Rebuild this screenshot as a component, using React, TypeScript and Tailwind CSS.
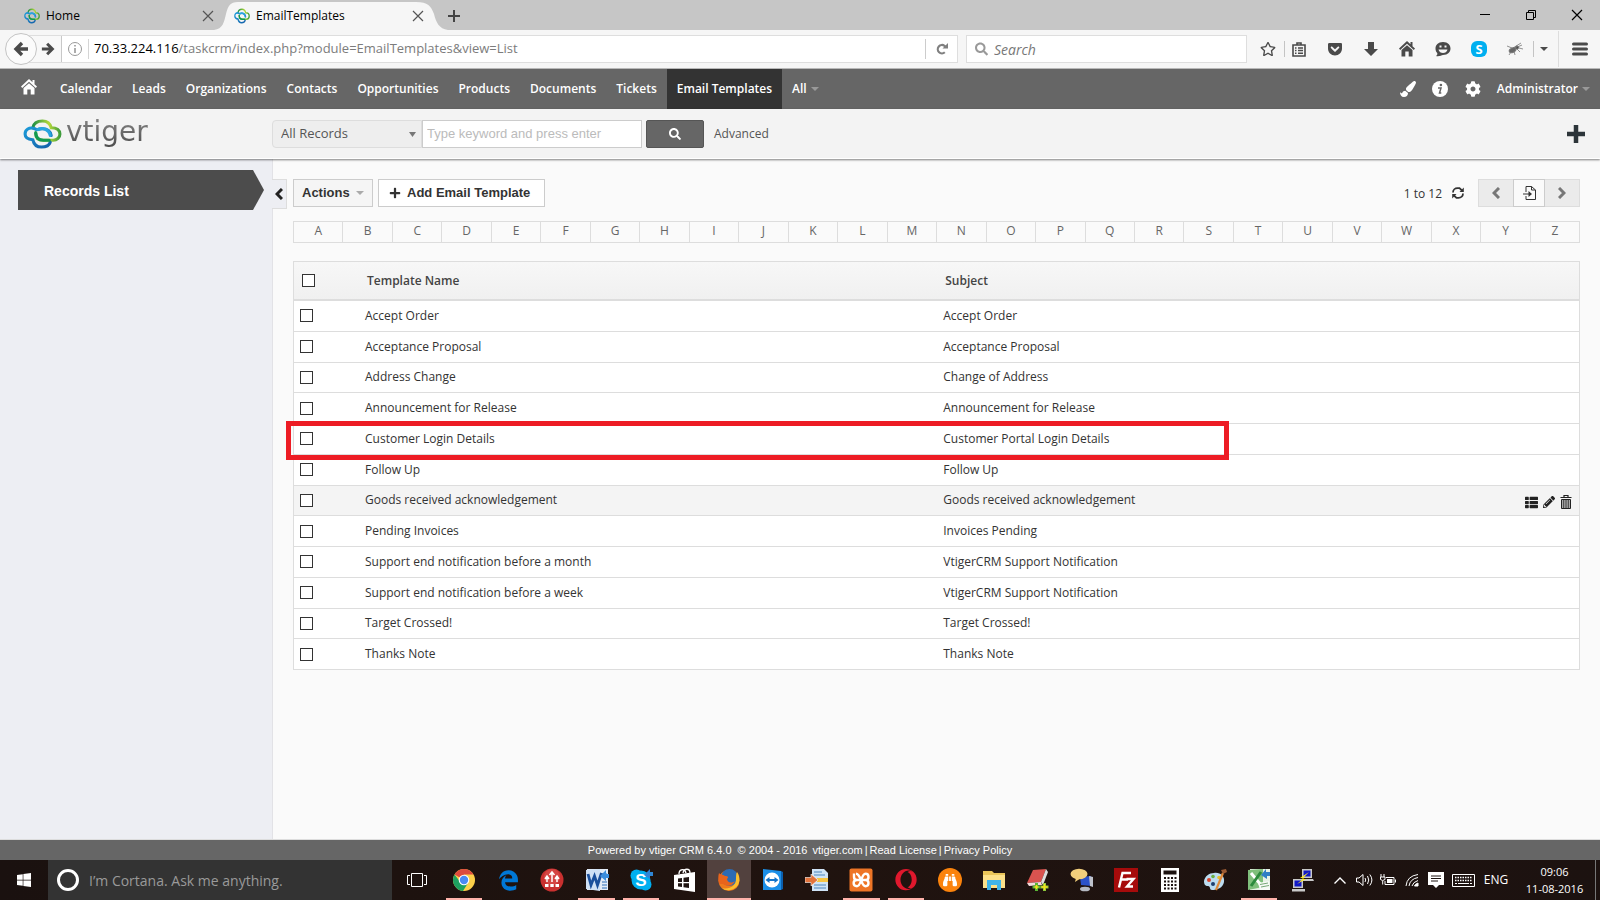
import type { ReactNode } from 'react';
import {
  FaRegStar, FaGetPocket, FaEdgeLegacy, FaOpera, FaBinoculars, FaPaintBrush,
  FaCog, FaSearch, FaPlus, FaWindows, FaThList, FaPencilAlt,
} from 'react-icons/fa';

const templates: [string, string][] = [
  ['Accept Order', 'Accept Order'],
  ['Acceptance Proposal', 'Acceptance Proposal'],
  ['Address Change', 'Change of Address'],
  ['Announcement for Release', 'Announcement for Release'],
  ['Customer Login Details', 'Customer Portal Login Details'],
  ['Follow Up', 'Follow Up'],
  ['Goods received acknowledgement', 'Goods received acknowledgement'],
  ['Pending Invoices', 'Invoices Pending'],
  ['Support end notification before a month', 'VtigerCRM Support Notification'],
  ['Support end notification before a week', 'VtigerCRM Support Notification'],
  ['Target Crossed!', 'Target Crossed!'],
  ['Thanks Note', 'Thanks Note'],
];
const HOVERED = 6;

const modules = [
  'Calendar', 'Leads', 'Organizations', 'Contacts', 'Opportunities', 'Products',
  'Documents', 'Tickets', 'Email Templates',
];

function CloudMark({ className }: { className: string }) {
  return (
    <svg viewBox="0 0 40 31" className={className} fill="none" strokeWidth="3.2" strokeLinecap="round" aria-hidden="true">
      <defs>
        <linearGradient id="markGreen" x1="0" y1="0" x2="1" y2="0">
          <stop offset="0" stopColor="#1d8f45" />
          <stop offset="0.6" stopColor="#b5d838" />
          <stop offset="1" stopColor="#3f9c3c" />
        </linearGradient>
        <linearGradient id="markBlue" x1="0" y1="0" x2="1" y2="1">
          <stop offset="0" stopColor="#1c9ad8" />
          <stop offset="1" stopColor="#1460a8" />
        </linearGradient>
      </defs>
      <path d="M10 9C11 4 15 2 20 2C25 2 28 5 29 9C35 9 38 12 38 15.500C38 19 35 22 31 22H21C15 22 13 19 13 15" stroke="url(#markGreen)" />
      <path d="M29 17C28 12 25 10 20 10C16 10 14 12 12 10C6 8 2 11 2 15.500C2 19 5 21 10 21.500C11 26 14 29 19 29C24 29 27 27 28 24" stroke="url(#markBlue)" />
      <path d="M13 14C13 19 16 22 21 22H27" stroke="#129a50" />
      <path d="M15 11C20 8 27 11 28 17" stroke="#28a4df" />
    </svg>
  );
}

function Cross({ className }: { className: string }) {
  return (
    <svg viewBox="0 0 12 12" className={className} fill="none" stroke="currentColor" strokeWidth="1.2" aria-hidden="true">
      <path d="M1 1L11 11M11 1L1 11" />
    </svg>
  );
}

function Caret({ className }: { className: string }) {
  return (
    <svg viewBox="0 0 8 4" preserveAspectRatio="none" className={className} fill="currentColor" aria-hidden="true">
      <path d="M0 0H8L4 4Z" />
    </svg>
  );
}

function Chevron({ className }: { className: string }) {
  return (
    <svg viewBox="0 0 8 12" className={className} fill="none" stroke="currentColor" strokeWidth="3" aria-hidden="true">
      <path d="M7 1L2 6L7 11" />
    </svg>
  );
}

function Arrow({ className }: { className: string }) {
  return (
    <svg viewBox="0 0 16 16" className={className} fill="none" stroke="currentColor" strokeWidth="3.400" aria-hidden="true">
      <path d="M15 8H4M9 2L3 8L9 14" />
    </svg>
  );
}

function HomeIcon({ className }: { className: string }) {
  return (
    <svg viewBox="0 0 16 16" className={className} fill="currentColor" aria-hidden="true">
      <path d="M8 0L0 7.500L1.200 8.900L8 2.800L14.800 8.900L16 7.500L13.500 5.200V1H11.500V3.300Z" />
      <path d="M8 4.200L2.500 9V15.500H6.300V10.500H9.700V15.500H13.500V9Z" />
    </svg>
  );
}

function TabStrip() {
  return (
    <div className="flex h-[30px] items-center bg-[#c6c6c6] text-black">
      <div className="flex h-full w-[214px] shrink-0 items-center pl-6 pt-0.5">
        <CloudMark className="h-4 w-4 scale-y-125" />
        <span className="ml-1.5 flex-1 text-[12px]">Home</span>
        <button aria-label="Close Home" className="flex w-3 text-[#555]"><Cross className="size-3" /></button>
      </div>
      <div className="relative flex h-full w-[234px] shrink-0 items-center pl-5 pr-6 pt-0.5">
        <svg viewBox="0 0 234 30" className="absolute inset-0 h-full w-full" aria-hidden="true">
          <path d="M0 30C9 29 10 22 12 14C14 6 16 2 24 2H202C214 2 217 6 220 14C222 22 225 29 234 30Z" fill="#f6f6f6" />
        </svg>
        <CloudMark className="relative h-4 w-4 scale-y-125" />
        <span className="relative ml-1.5 flex-1 text-[12px]">EmailTemplates</span>
        <button aria-label="Close EmailTemplates" className="relative flex text-[#555]"><Cross className="size-3" /></button>
      </div>
      <button aria-label="New tab" className="pt-0.5 text-[#444]">
        <svg viewBox="0 0 12 12" className="size-3" stroke="currentColor" strokeWidth="2" aria-hidden="true"><path d="M6 0V12M0 6H12" /></svg>
      </button>
      <div className="ml-auto flex">
        <button aria-label="Minimize" className="flex h-7 w-[46px] items-center justify-center">
          <svg viewBox="0 0 10 10" className="size-2.5" stroke="currentColor" aria-hidden="true"><path d="M0 4.500H10" /></svg>
        </button>
        <button aria-label="Restore" className="flex h-7 w-[46px] items-center justify-center">
          <svg viewBox="0 0 10 10" className="size-2.5" stroke="currentColor" fill="none" aria-hidden="true"><path d="M.5 2.500H7.500V9.500H.5ZM2.500 2.500V.5H9.500V7.500H7.500" /></svg>
        </button>
        <button aria-label="Close" className="flex h-7 w-[46px] items-center justify-center"><Cross className="size-3" /></button>
      </div>
    </div>
  );
}

function ToolButton({ label, children }: { label: string; children: ReactNode }) {
  return <button aria-label={label} className="flex w-9 shrink-0 items-center justify-center">{children}</button>;
}

function AddressBar() {
  return (
    <div className="flex h-[39px] items-center border-b border-[#b8b8b8] bg-[#f6f6f6] pl-[5px] text-[#4a4a4a]">
      <button aria-label="Back" className="z-10 flex size-8 shrink-0 items-center justify-center rounded-full border border-[#c4c4c4] bg-[#fbfbfb]">
        <Arrow className="size-4" />
      </button>
      <div className="-ml-3 flex h-7 flex-1 items-center border border-[#dedede] bg-white">
        <button aria-label="Forward" className="flex h-full w-9 items-center justify-end border-r border-[#c8c8c8] bg-[#f8f8f8] pr-1.5">
          <Arrow className="size-3.5 rotate-180" />
        </button>
        <span className="flex w-[26px] justify-center">
          <svg viewBox="0 0 14 14" className="size-3.5" fill="none" stroke="#999" aria-hidden="true">
            <circle cx="7" cy="7" r="6.500" /><path d="M7 6V11M7 3V4.500" strokeWidth="1.600" />
          </svg>
        </span>
        <span className="h-5 border-l border-[#d5d5d5]" />
        <span className="ml-[5px] flex-1 text-[13px] text-[#7c7c7c]">
          <span className="text-black">70.33.224.116</span>/taskcrm/index.php?module=EmailTemplates&amp;view=List
        </span>
        <button aria-label="Reload" className="flex h-5 w-8 items-center justify-center border-l border-[#ccc] text-[#808080]">
          <svg viewBox="0 0 12 12" className="size-3" fill="none" stroke="currentColor" strokeWidth="2.2" aria-hidden="true">
            <path d="M8.800 9.300A4.200 4.200 0 1 1 8.500 2.800L10 4.300" /><path d="M12 0V5.500H6.500Z" fill="currentColor" stroke="none" />
          </svg>
        </button>
      </div>
      <label className="ml-2 flex h-7 w-[281px] shrink-0 items-center border border-[#dedede] bg-white pl-2">
        <FaSearch className="size-3.5 text-[#999]" />
        <input aria-label="Search the web" placeholder="Search" className="ml-1.5 w-full bg-transparent text-[14px] italic outline-none placeholder:text-[#777]" />
      </label>
      <div className="ml-[5px] flex items-center">
        <button aria-label="Bookmark" className="flex w-8 justify-center"><FaRegStar className="size-4" /></button>
        <span className="h-4 border-l border-[#c4c4c4]" />
        <button aria-label="Bookmarks list" className="flex w-8 items-center justify-center pr-1">
          <svg viewBox="0 0 14 15" className="h-[15px] w-3.5" fill="none" stroke="currentColor" strokeWidth="1.600" aria-hidden="true">
            <path d="M1 3H13V14H1ZM5 3V1H9V3M3 6H4.500M6 6H11M3 8.500H4.500M6 8.500H11M3 11.200H4.500M6 11.200H11" />
          </svg>
        </button>
        <ToolButton label="Pocket"><FaGetPocket className="size-4" /></ToolButton>
        <ToolButton label="Downloads">
          <svg viewBox="0 0 14 14" className="size-3.5" fill="currentColor" aria-hidden="true"><path d="M4 0H10V7H14L7 14L0 7H4Z" /></svg>
        </ToolButton>
        <ToolButton label="Home page"><HomeIcon className="size-4" /></ToolButton>
        <ToolButton label="Chat">
          <svg viewBox="0 0 16 15" className="h-[15px] w-4" aria-hidden="true">
            <path d="M8 0C13 0 15.500 3 15.500 6.500C15.500 10 13 13 8 13C6.500 13 4 15 1 14C2.500 13 2.500 12 2.200 11C1 10 .5 8 .5 6.500C.5 3 3 0 8 0Z" fill="currentColor" />
            <path d="M4.500 4.500H6.500M9.500 4.500H11.500" stroke="#f6f6f6" strokeWidth="1.800" />
            <path d="M3.500 7.500H12.500C12 10 10 11 8 11C6 11 4 10 3.500 7.500Z" fill="#f6f6f6" />
          </svg>
        </ToolButton>
        <ToolButton label="Skype"><span className="flex size-4 items-center justify-center rounded-md bg-[#00aff0] text-[13px] font-bold leading-4 text-white">S</span></ToolButton>
        <ToolButton label="Firebug">
          <svg viewBox="0 0 16 14" className="h-3.5 w-4" fill="none" stroke="#777" aria-hidden="true">
            <ellipse cx="5.500" cy="8" rx="3.500" ry="2.200" fill="#666" transform="rotate(-25 6 8)" /><circle cx="10" cy="5.500" r="1.600" fill="#333" />
            <path d="M0 4L5 6M6 6L14 1M8 6L15 3M4 10L2 13M7 9L8 13M10 7L13 10M12 6L16 7" strokeWidth=".8" />
          </svg>
        </ToolButton>
        <span className="h-4 border-l border-[#c4c4c4]" />
        <button aria-label="More tools" className="flex w-6 justify-center pr-1"><Caret className="h-1 w-2" /></button>
        <span className="h-9 border-l border-[#ddd]" />
        <button aria-label="Menu" className="flex w-[41px] justify-center">
          <svg viewBox="0 0 16 14" className="h-3.5 w-4" stroke="currentColor" strokeWidth="3" strokeLinecap="round" aria-hidden="true"><path d="M1.500 2H14.500M1.500 7H14.500M1.500 12H14.500" /></svg>
        </button>
      </div>
    </div>
  );
}

function NavBar() {
  return (
    <nav className="flex h-10 items-center bg-[#666] text-[12px] font-semibold text-white">
      <a href="#home" aria-label="Home" className="flex w-[50px] shrink-0 justify-center pb-1 pl-2"><HomeIcon className="size-4" /></a>
      {modules.map((m) => (
        <a
          key={m}
          href="#module"
          className={m === 'Email Templates' ? 'flex h-full items-center bg-[#333] px-2.5' : 'flex h-full items-center px-2.5'}
        >
          {m}
        </a>
      ))}
      <button className="flex h-full items-center gap-1 px-2.5">All <Caret className="h-1 w-2 text-[#999]" /></button>
      <div className="ml-auto flex items-center">
        <button aria-label="Theme" className="flex w-8 justify-center"><FaPaintBrush className="size-4" /></button>
        <button aria-label="Information" className="flex w-[33px] justify-center">
          <svg viewBox="0 0 16 16" className="size-4" aria-hidden="true">
            <circle cx="8" cy="8" r="8" fill="#fff" /><circle cx="8.900" cy="4" r="1.300" fill="#666" />
            <path d="M6 7H9L7.500 12H9.300" stroke="#666" strokeWidth="1.500" fill="none" />
          </svg>
        </button>
        <button aria-label="Settings" className="flex w-8 justify-center"><FaCog className="size-4" /></button>
        <button className="flex items-center gap-1 pl-2 pr-2.5">Administrator <Caret className="h-1 w-2 text-[#999]" /></button>
      </div>
    </nav>
  );
}

function SearchHeader() {
  return (
    <header className="z-10 flex h-[50px] shrink-0 items-center border-b border-white bg-[#f3f3f3] text-[12px] text-[#555] shadow-[0_1px_2px_rgba(0,0,0,0.5)]">
      <a href="#home" aria-label="vtiger" className="flex w-[272px] shrink-0 items-center pl-[23px]">
        <CloudMark className="h-[30px] w-[39px]" />
        <span className="ml-1 bg-linear-to-b from-[#8a8a8a] to-[#444] bg-clip-text pb-1 font-['DejaVu_Sans',sans-serif] text-[28px] leading-8 text-transparent">vtiger</span>
      </a>
      <div className="relative">
        <select aria-label="Search in" className="h-7 w-[150px] appearance-none rounded-l-sm border border-[#ddd] bg-[#eee] pl-2 text-[13px] text-[#555]">
          <option>All Records</option>
        </select>
        <Caret className="pointer-events-none absolute right-1.5 top-3 h-[5px] w-[7px] text-[#777]" />
      </div>
      <input aria-label="Keyword" placeholder="Type keyword and press enter" className="h-7 w-[220px] border border-[#ccc] bg-white px-1 font-['Liberation_Sans',sans-serif] text-[13px] outline-none placeholder:text-[#bbb]" />
      <button aria-label="Search" className="ml-1 flex h-7 w-[58px] items-center justify-center rounded-xs border border-[#555] bg-[#666] text-white"><FaSearch className="size-3" /></button>
      <a href="#advanced" className="ml-2.5">Advanced</a>
      <button aria-label="Quick create" className="ml-auto mr-[15px] text-[#2c3439]">
        <svg viewBox="0 0 18 18" className="size-[18px]" stroke="currentColor" strokeWidth="4.500" aria-hidden="true"><path d="M9 0V18M0 9H18" /></svg>
      </button>
    </header>
  );
}

function Tick({ label }: { label: string }) {
  return <input type="checkbox" aria-label={label} className="block size-[13px] appearance-none border border-[#333] bg-white" />;
}

function TemplateTable() {
  return (
    <div className="relative mt-[18px]">
      <table className="h-[409px] w-full table-fixed border-separate border-spacing-0 border border-b-0 border-[#ddd] bg-white text-left text-[12px] text-[#333]">
        <thead>
          <tr className="h-[39px] bg-linear-to-b from-[#f7f7f7] to-[#f0f0f0] text-[#444]">
            <th className="w-[63px] border-b-2 border-[#ddd] pl-2"><Tick label="Select all" /></th>
            <th className="w-[45%] border-b-2 border-[#ddd] pl-2.5 font-semibold">Template Name</th>
            <th className="border-b-2 border-[#ddd] pl-2.5 font-semibold">Subject</th>
            <th className="w-[70px] border-b-2 border-[#ddd]" aria-label="Row actions" />
          </tr>
        </thead>
        <tbody>
          {templates.map(([name, subject], i) => (
            <tr key={name} className={i === HOVERED ? 'bg-[#f4f4f4]' : 'bg-white'}>
              <td className="border-b border-[#ddd] pl-1.5"><Tick label={name} /></td>
              <td className="border-b border-[#ddd] pl-2">{name}</td>
              <td className="border-b border-[#ddd] pl-2">{subject}</td>
              <td className="border-b border-[#ddd] pr-[7px]">
                {i === HOVERED && (
                  <div className="flex items-center justify-end gap-[5px] pt-1 text-[#222]">
                    <button aria-label="Details"><FaThList className="size-[13px]" /></button>
                    <button aria-label="Edit"><FaPencilAlt className="size-3" /></button>
                    <button aria-label="Delete">
                      <svg viewBox="0 0 12 14" className="h-3.5 w-3" fill="none" stroke="currentColor" aria-hidden="true">
                        <path d="M.5 2.500H11.500M4 2V.5H8V2" strokeWidth="1.200" /><path d="M1.500 4.500H10.500V13.500H1.500Z" fill="#aaa" /><path d="M3.700 5V13M6 5V13M8.300 5V13" strokeWidth=".8" />
                      </svg>
                    </button>
                  </div>
                )}
              </td>
            </tr>
          ))}
        </tbody>
      </table>
      <div className="pointer-events-none absolute -left-[7px] right-[351px] top-40 h-[39px] border-5 border-[#ed1c24]" />
    </div>
  );
}

function Records() {
  return (
    <div className="flex flex-1 bg-[#fafafa]">
      <aside className="w-[273px] shrink-0 border-r border-[#e2e2e6] bg-[#edeef3] pl-[18px] pt-[11px]">
        <a
          href="#records"
          className="flex h-10 w-[246px] items-center bg-[#4c4c4c] pl-[26px] pt-0.5 font-['Liberation_Sans',sans-serif] text-[14px] font-bold text-white [clip-path:polygon(0_0,235px_0,100%_50%,235px_100%,0_100%)]"
        >
          Records List
        </a>
      </aside>
      <main className="flex flex-1 items-start pr-5 pt-5">
        <button aria-label="Collapse sidebar" className="-ml-px flex h-[30px] w-[15px] shrink-0 items-center justify-center border border-l-0 border-[#ddd] bg-[#edeef3] text-[#222]">
          <Chevron className="h-3 w-2" />
        </button>
        <div className="ml-1.5 flex-1">
          <div className="flex items-center font-['Liberation_Sans',sans-serif] text-[13px] font-bold text-[#333]">
            <button className="flex h-7 w-20 items-center justify-between border border-[#ccc] bg-[#f5f5f5] px-2">Actions <Caret className="h-1 w-2 text-[#aaa]" /></button>
            <button className="ml-[5px] flex h-7 items-center gap-1.5 border border-[#ccc] bg-white pl-2.5 pr-3.5"><FaPlus className="size-3" /> Add Email Template</button>
            <span className="ml-auto pt-0.5 font-['Open_Sans',sans-serif] text-[12px] font-normal">1 to 12</span>
            <button aria-label="Refresh" className="ml-2.5">
              <svg viewBox="0 0 12 12" className="size-3" fill="none" stroke="currentColor" strokeWidth="1.800" aria-hidden="true">
                <path d="M1 5.500C1 3 3 1.200 5.500 1.200H7.500L10 3.500M11 6.500C11 9 9 10.800 6.500 10.800H4.500L2 8.500" />
                <path d="M11.800 .5V5H7.500ZM.2 11.500V7H4.500Z" fill="currentColor" stroke="none" />
              </svg>
            </button>
            <div className="ml-3.5 flex h-7 text-[#777]">
              <button aria-label="Previous page" className="flex w-[35px] items-center justify-center border border-r-0 border-[#ddd] bg-[#ebebeb]"><Chevron className="h-3 w-2" /></button>
              <button aria-label="Go to page" className="flex w-8 items-center justify-center border border-[#ccc] bg-[#fafafa] text-[#333]">
                <svg viewBox="0 0 13 14" className="h-3.5 w-[13px]" fill="none" stroke="currentColor" aria-hidden="true"><path d="M3 6V.5H8.500L12.500 4V13.500H3V10M8.500 .5V4H12.500M0 8H7" /><path d="M5.500 5L9 8L5.500 11Z" fill="currentColor" stroke="none" /></svg>
              </button>
              <button aria-label="Next page" className="flex w-[35px] items-center justify-center border border-l-0 border-[#ddd] bg-[#ebebeb]"><Chevron className="h-3 w-2 rotate-180" /></button>
            </div>
          </div>
          <div className="mt-3.5 flex h-[22px] border-y border-r border-[#ddd] text-[12px] text-[#666]">
            {'ABCDEFGHIJKLMNOPQRSTUVWXYZ'.split('').map((c) => (
              <a key={c} href="#letter" className="flex-1 border-l border-[#ddd] text-center leading-[18px]">{c}</a>
            ))}
          </div>
          <TemplateTable />
        </div>
      </main>
    </div>
  );
}

function AppIcon({ children }: { children: ReactNode }) {
  return <svg viewBox="0 0 24 24" className="size-6" aria-hidden="true">{children}</svg>;
}

const taskbar: { name: string; open?: boolean; active?: boolean; icon: ReactNode }[] = [
  {
    name: 'Chrome', open: true,
    icon: (
      <AppIcon>
        <circle cx="12" cy="12" r="11" fill="#fdd04a" />
        <path d="M12 12L2.500 6.500A11 11 0 0 1 21.500 6.500H12Z" fill="#dd4b3e" />
        <path d="M2.500 6.500A11 11 0 0 0 11 23L16 15L12 12L7.500 13Z" fill="#1da160" />
        <circle cx="12" cy="12" r="5.300" fill="#fff" /><circle cx="12" cy="12" r="4.200" fill="#4a8af4" />
      </AppIcon>
    ),
  },
  { name: 'Edge', icon: <FaEdgeLegacy className="size-[21px] text-[#0078d7]" /> },
  {
    name: 'Remote hub',
    icon: (
      <AppIcon>
        <circle cx="12" cy="12" r="11.500" fill="#c9302f" /><circle cx="12" cy="9" r="8" fill="#df5a58" opacity=".5" />
        <path d="M12 14V5M9.500 7L12 4L14.500 7M7 14V9M5 11L7 8L9 11M17 14V9M15 11L17 8L19 11" stroke="#fff" strokeWidth="1.500" fill="none" />
        <path d="M5 16H8.500V19H5ZM10.300 16H13.700V19H10.300ZM15.500 16H19V19H15.500Z" fill="#fff" />
      </AppIcon>
    ),
  },
  {
    name: 'Word', open: true,
    icon: (
      <AppIcon>
        <rect x="2" y="1" width="21" height="21" fill="#e3ecf7" /><path d="M17 6H22M17 14H22M17 17H22M17 20H22" stroke="#2b6cb8" />
        <path d="M1 2L15 1V23L1 21Z" fill="#cfe0f5" />
        <path d="M3 6L6 17L9.500 8L12.500 17L16.500 5" stroke="#1a4f9c" strokeWidth="2.800" fill="none" />
        <path d="M15 8L21 2V6H24V10H21V13Z" fill="#3a8dde" />
      </AppIcon>
    ),
  },
  {
    name: 'Skype', open: true,
    icon: (
      <AppIcon>
        <circle cx="12" cy="12" r="9.500" fill="#00aff0" /><circle cx="7.500" cy="7.500" r="6" fill="#00aff0" /><circle cx="16.500" cy="16.500" r="6" fill="#00aff0" />
        <text x="12" y="18" textAnchor="middle" fontSize="17" fontWeight="700" fontFamily="Liberation Sans" fill="#fff">S</text>
        <path d="M15 7L21 1V4H24V8H21V11Z" fill="#2f86d6" />
      </AppIcon>
    ),
  },
  {
    name: 'Store',
    icon: (
      <AppIcon>
        <path d="M1 7L22 4V24L1 21Z" fill="#fff" /><path d="M6 6C6 1 12 0 13 5M10 5C11 0 17 0 17 5" stroke="#fff" fill="none" strokeWidth="1.300" />
        <path d="M5 10.500L9 10V14H5ZM10.500 9.800L16 9V14H10.500ZM5 15.300H9V19L5 18.500ZM10.500 15.300H16V20L10.500 19.300Z" fill="#1f1411" />
      </AppIcon>
    ),
  },
  {
    name: 'Firefox', open: true, active: true,
    icon: (
      <AppIcon>
        <circle cx="12" cy="12.500" r="10.500" fill="#ee7a1b" /><circle cx="12.500" cy="9.500" r="8.500" fill="#2c6bb3" />
        <path d="M2 5C3 7 6 6 8 8C11 8 12 9 10 11C10 14 14 16 18 13C16 18 10 19 6 16L2 16C1 12 1 8 2 5Z" fill="#e8641b" />
        <path d="M20 4C24 9 23 17 18 20C14 23 8 23 5 20C12 22 19 18 19 11C19 8 19 6 20 4Z" fill="#fbbf2d" />
      </AppIcon>
    ),
  },
  {
    name: 'TeamViewer',
    icon: (
      <AppIcon>
        <path d="M2 1L20 3V22L2 22Z" fill="#1b8fe8" /><path d="M20 3L22 4V21L20 22Z" fill="#0b5fae" /><circle cx="11" cy="12" r="7.500" fill="#fff" />
        <path d="M4.500 12L8.500 9V11H13.500V9L17.500 12L13.500 15V13H8.500V15Z" fill="#1273c9" />
      </AppIcon>
    ),
  },
  {
    name: 'Import',
    icon: (
      <AppIcon>
        <path d="M7 1H19L23 5V23H7Z" fill="#cfe3f6" /><path d="M9 17H21M9 20H21M9 4H17M9 7H20" stroke="#4c86bd" /><path d="M12 10H23V14H12Z" fill="#f6c443" />
        <path d="M0 9.500H6V6L13 12L6 18V14.500H0Z" fill="#e2733c" stroke="#fff" strokeWidth=".6" />
      </AppIcon>
    ),
  },
  {
    name: 'XAMPP', open: true,
    icon: (
      <AppIcon>
        <rect x=".5" y=".5" width="23" height="23" rx="2" fill="#ee7526" />
        <path d="M5 5.500V9C5 11 6 12 8 12H16.500C20.500 12 20.500 5.800 16.500 5.800C12 5.800 12.500 18.200 8 18.200C3.500 18.200 3.500 12 8 12M7 5.800C12 5.800 12 18.200 16.500 18.200C20.500 18.200 20.500 12 16.500 12" stroke="#fff" strokeWidth="2.400" fill="none" />
      </AppIcon>
    ),
  },
  { name: 'Opera', open: true, icon: <FaOpera className="size-[22px] text-[#e0182d]" /> },
  { name: 'Search tool', icon: <span className="flex size-6 items-center justify-center rounded-full bg-[#fb830c]"><FaBinoculars className="size-3.5 text-white" /></span> },
  {
    name: 'File Explorer',
    icon: (
      <AppIcon>
        <path d="M1 3H10L12 5H23V20H1Z" fill="#e9c55a" /><path d="M1 7H23V20H1Z" fill="#fbe08a" /><path d="M5 12H19V22H15V17H9V22H5Z" fill="#3fb4ea" />
      </AppIcon>
    ),
  },
  {
    name: 'Journal',
    icon: (
      <AppIcon>
        <path d="M7 2L20 1L15 14L1 15Z" fill="#d9534f" /><path d="M1 15L15 14L16 17L3 18Z" fill="#f3dada" /><path d="M20 1L22 4L17 17L15 14Z" fill="#ddd" />
        <path d="M10.500 15V23M6.500 19H14.500" stroke="#59b534" strokeWidth="3" /><path d="M18.500 15V23M14.500 19H22.500" stroke="#8cc63a" strokeWidth="3" />
        <path d="M10.500 17V21M8.500 19H12.500M18.500 16V22M15.500 19H21.500" stroke="#f7e21c" strokeWidth="1.400" />
      </AppIcon>
    ),
  },
  {
    name: 'Messenger',
    icon: (
      <AppIcon>
        <path d="M10 9L21 8L22 18L11 17Z" fill="#2b52c9" /><path d="M19 8L23 9V19L20 18Z" fill="#bfc3cc" /><ellipse cx="15" cy="21" rx="5" ry="2.300" fill="#b5b9c2" />
        <ellipse cx="9" cy="6" rx="8.500" ry="5.200" fill="#f2cf7c" /><path d="M6 10L5 14L11 10Z" fill="#f2cf7c" />
      </AppIcon>
    ),
  },
  {
    name: 'FileZilla',
    icon: (
      <AppIcon>
        <rect width="24" height="24" fill="#a60b0b" />
        <path d="M5 19.500L8.500 5H17M7 11.500H14M12.500 11H19.500L13 18.500H19" stroke="#fff" strokeWidth="2.400" fill="none" />
      </AppIcon>
    ),
  },
  {
    name: 'Calculator',
    icon: (
      <AppIcon>
        <rect x="3" width="18" height="24" fill="#fff" /><rect x="5.500" y="2.500" width="13" height="4" fill="#1c1210" />
        <path d="M6 10H18.500M6 13.500H18.500M6 17H18.500M6 20.500H18.500" stroke="#1c1210" strokeWidth="2" strokeDasharray="2 1.500" />
      </AppIcon>
    ),
  },
  {
    name: 'Paint',
    icon: (
      <AppIcon>
        <path d="M11 5C17 4 22 8 21 14C20 20 14 22 9 22C6 22 8 18 5 18C2 18 1 16 1 13C2 8 6 5 11 5Z" fill="#bcdcf0" />
        <circle cx="6" cy="12" r="2" fill="#d8432c" /><circle cx="10" cy="8.500" r="1.800" fill="#6ab043" /><circle cx="16" cy="9.500" r="1.800" fill="#e8c22c" /><circle cx="10" cy="16" r="2" fill="#1f3f6e" />
        <path d="M13 22L20 5" stroke="#e08a3a" strokeWidth="2.200" /><path d="M18 2L23 1L24 4L20 6Z" fill="#9a5a33" />
      </AppIcon>
    ),
  },
  {
    name: 'Excel', open: true,
    icon: (
      <AppIcon>
        <path d="M3 1H23V22H3Z" fill="#e7f1e5" /><path d="M1 2L16 1V19L1 22Z" fill="#7fbf7b" />
        <path d="M4 5L14 17" stroke="#fff" strokeWidth="3" /><path d="M14 4L4 18" stroke="#2c8a3c" strokeWidth="3" />
        <path d="M11 15L22 13L23 22H13Z" fill="#f7faf6" /><path d="M13 16.500L21 15M14 19L22 17.500" stroke="#77a877" />
        <path d="M14 7L19 1V4H23V8H20V11Z" fill="#2f7ec4" />
      </AppIcon>
    ),
  },
  {
    name: 'PuTTY',
    icon: (
      <AppIcon>
        <path d="M11 1H21V10H11ZM12 11H22L23 13H12Z" fill="#c9c9c9" /><path d="M12.500 2.500H19.500V8.500H12.500Z" fill="#1018c8" />
        <path d="M2 11H12V20H2ZM1 21H14V23.500H1Z" fill="#c9c9c9" /><path d="M3.500 12.500H10.500V18.500H3.500Z" fill="#1018c8" />
        <path d="M18 4L9 10H13L6 16L15 11H11Z" fill="#ffee1f" />
      </AppIcon>
    ),
  },
];

function Tray() {
  return (
    <div className="flex w-[275px] shrink-0 items-center pl-[3px] text-[12px] text-white">
      <button aria-label="Show hidden icons" className="flex w-6 justify-center"><svg viewBox="0 0 12 7" className="h-[7px] w-3" fill="none" stroke="currentColor" strokeWidth="1.400" aria-hidden="true"><path d="M.5 6.500L6 1L11.500 6.500" /></svg></button>
      <button aria-label="Volume" className="flex w-6 justify-center"><svg viewBox="0 0 17 14" className="h-3.5 w-[17px]" fill="none" stroke="currentColor" aria-hidden="true"><path d="M.5 5V9H3L7 12.500V1.500L3 5ZM9 5Q10.500 7 9 9M11.500 3Q14 7 11.500 11M13.800 1.500Q18 7 13.800 12.500" /></svg></button>
      <button aria-label="Battery" className="flex w-6 justify-center"><svg viewBox="0 0 16 14" className="h-3.5 w-4" fill="none" stroke="currentColor" aria-hidden="true"><path d="M6 4.500H14V11.500H5V8M15.500 6.500V9.500M1 1V4M4 1V4M.5 4H5V6.500L2.700 7.500L.5 6.500ZM2.700 8V11.500" /><path d="M7 6H12.500V10H7Z" fill="currentColor" stroke="none" /></svg></button>
      <button aria-label="Network" className="flex w-6 justify-center"><svg viewBox="0 0 14 14" className="size-3.5" fill="none" stroke="currentColor" aria-hidden="true"><path d="M1 13Q2 3 13 1.500M4 13Q5 6 13 4.500M7 13Q8 9 13 7.500" /><path d="M9.500 13Q10 11 13 10V13Z" fill="currentColor" /></svg></button>
      <button aria-label="Notifications" className="flex w-6 justify-center"><svg viewBox="0 0 16 16" className="size-4" aria-hidden="true"><path d="M0 0H16V13H11L8 16L5 13H0Z" fill="#fff" /><path d="M3 4H13M3 6.500H13M3 9H10" stroke="#1c1210" /></svg></button>
      <button aria-label="Touch keyboard" className="flex w-[30px] justify-center"><svg viewBox="0 0 23 13" className="h-[13px] w-[23px]" fill="none" stroke="currentColor" aria-hidden="true"><path d="M.5 .5H22.500V12.500H.5Z" /><path d="M3 3.500H20M3 6.500H20" strokeDasharray="1.500 1" strokeWidth="1.400" /><path d="M3 9.500H5M6 9.500H17M18 9.500H20" /></svg></button>
      <button aria-label="Language" className="w-9 text-center">ENG</button>
      <time className="flex flex-1 flex-col text-center text-[11px] leading-[17px]"><span>09:06</span><span>11-08-2016</span></time>
      <span className="mr-1 h-10 border-l border-[#777]" />
    </div>
  );
}

function Taskbar() {
  return (
    <div className="flex h-10 shrink-0 bg-[#1c1210] bg-linear-to-r from-[#1a110f] via-[#20130f] to-[#1c1210]">
      <button aria-label="Start" className="flex w-12 shrink-0 items-center justify-center text-white"><FaWindows className="size-4" /></button>
      <label className="flex w-[344px] shrink-0 items-center bg-[#333] pl-[9px]">
        <span className="size-[22px] shrink-0 rounded-full border-3 border-white" />
        <input aria-label="Ask Cortana" placeholder="I’m Cortana. Ask me anything." className="ml-2.5 w-full bg-transparent text-[14px] text-white outline-none placeholder:text-[#9a9a9a]" />
      </label>
      <button aria-label="Task view" className="flex w-[50px] shrink-0 items-center justify-center text-white">
        <svg viewBox="0 0 20 14" className="h-3.5 w-5" fill="none" stroke="currentColor" aria-hidden="true"><path d="M4.500 .5H15.500V13.500H4.500ZM3 2.500H.5V11.500H3M17 2.500H19.500V11.500H17" /></svg>
      </button>
      <div className="grid min-w-0 flex-1 grid-cols-20">
        {taskbar.map((t) => (
          <button key={t.name} aria-label={t.name} className={t.active ? 'relative flex items-center justify-center bg-[#52413e]' : 'relative flex items-center justify-center'}>
            {t.icon}
            {t.open && <span className={t.active ? 'absolute inset-x-0 bottom-0 h-0.5 bg-[#ffb3ab]' : 'absolute inset-x-1 bottom-0 h-0.5 bg-[#ffb3ab]'} />}
          </button>
        ))}
      </div>
      <Tray />
    </div>
  );
}

export default function App() {
  return (
    <div className="flex min-h-screen flex-col font-['Open_Sans',sans-serif]">
      <TabStrip />
      <AddressBar />
      <NavBar />
      <SearchHeader />
      <Records />
      <footer className="flex h-[21px] shrink-0 items-center justify-center gap-0.5 border-t border-[#ddd] bg-[#666] font-['Liberation_Sans',sans-serif] text-[11px] text-white">
        <span>Powered by vtiger CRM 6.4.0 &nbsp;© 2004 - 2016&nbsp;</span>
        <a href="#vtiger">vtiger.com</a>|<a href="#license">Read License</a>|<a href="#privacy">Privacy Policy</a>
      </footer>
      <Taskbar />
    </div>
  );
}
